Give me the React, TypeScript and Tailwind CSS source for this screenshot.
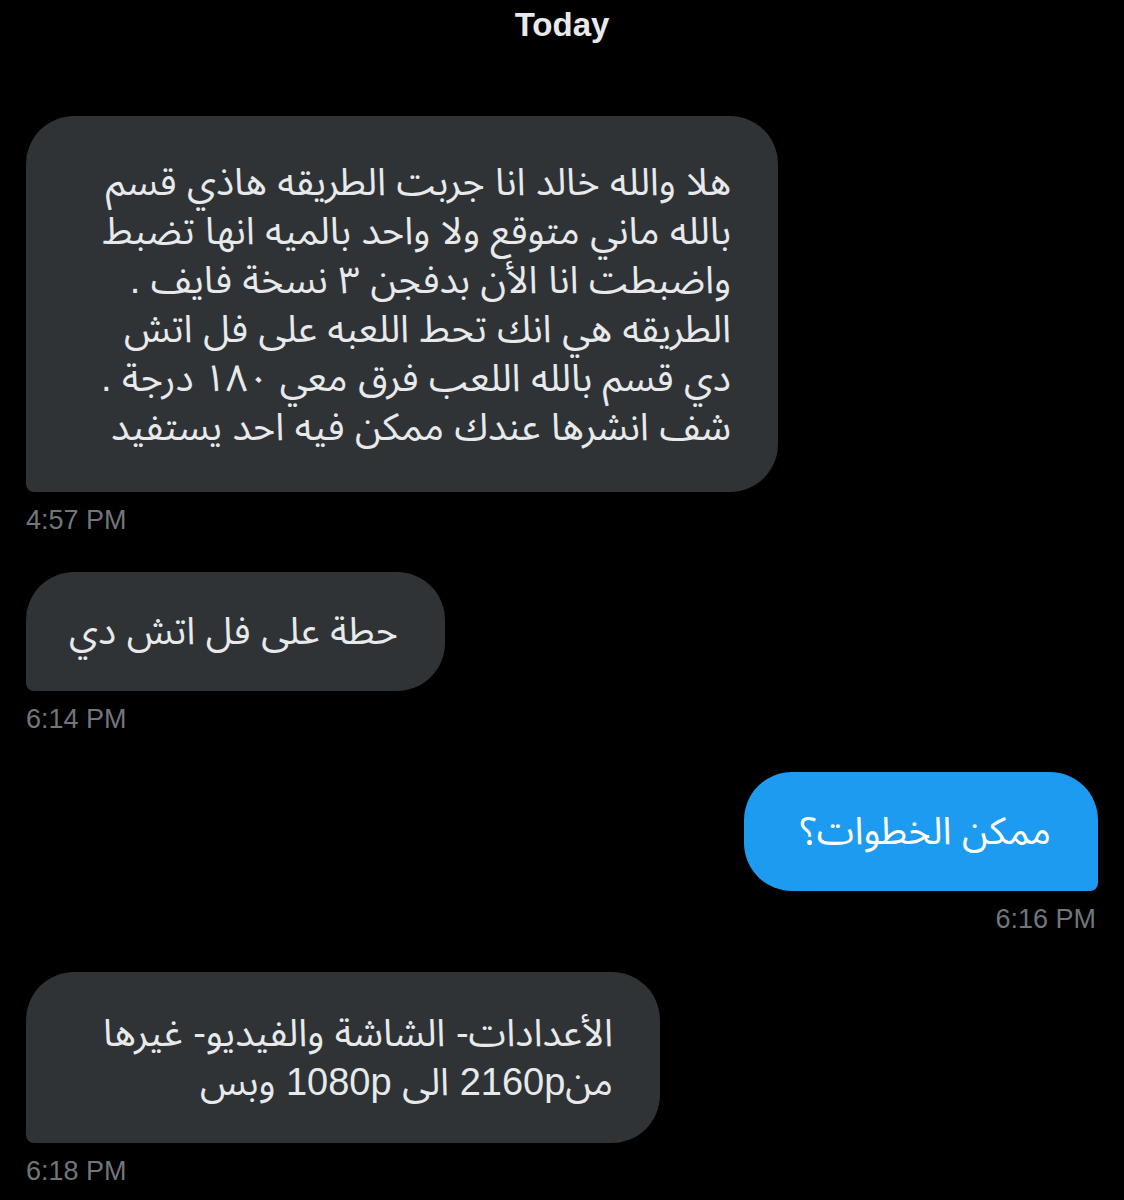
const arabic = "font-['Liberation_Sans','Noto_Sans_Arabic','DejaVu_Sans',sans-serif]";

type BubbleProps = {
  lines: string[];
  sent?: boolean;
  width: string;
  padY: string;
};

function Bubble({ lines, sent = false, width, padY }: BubbleProps) {
  return (
    <div
      dir="rtl"
      className={[
        width,
        padY,
        arabic,
        'pr-[47px] text-right text-[38px] leading-[49px]',
        sent
          ? 'self-end rounded-[48px] rounded-br-[8px] bg-[#1d9bf0] text-white'
          : 'self-start rounded-[48px] rounded-bl-[8px] bg-[#2f3336] text-[#e7e9ea]',
      ].join(' ')}
    >
      {lines.map((line) => (
        <div key={line} className="whitespace-nowrap">
          {line}
        </div>
      ))}
    </div>
  );
}

function Time({ children, sent = false }: { children: string; sent?: boolean }) {
  return (
    <div
      className={`mt-[14px] font-['Liberation_Sans',Arial,sans-serif] text-[27px] leading-[28px] text-[#71767b] ${
        sent ? 'self-end pr-[2px]' : 'self-start'
      }`}
    >
      {children}
    </div>
  );
}

export default function App() {
  return (
    <div className="flex min-h-[1200px] flex-col bg-black px-[26px] pt-[8px]">
      <div className="text-center font-['Liberation_Sans',Arial,sans-serif] text-[33px] font-bold leading-[34px] text-[#e7e9ea]">
        Today
      </div>

      <div className="mt-[74px] flex flex-col">
        <Bubble
          width="w-[752px]"
          padY="pt-[42px] pb-[40px]"
          lines={[
            'هلا والله خالد انا جربت الطريقه هاذي قسم',
            'بالله ماني متوقع ولا واحد بالميه انها تضبط',
            'واضبطت انا الأن بدفجن ٣ نسخة فايف .',
            'الطريقه هي انك تحط اللعبه على فل اتش',
            'دي قسم بالله اللعب فرق معي ١٨٠ درجة .',
            'شف انشرها عندك ممكن فيه احد يستفيد',
          ]}
        />
        <Time>4:57 PM</Time>
      </div>

      <div className="mt-[38px] flex flex-col">
        <Bubble width="w-[419px]" padY="py-[35px]" lines={['حطة على فل اتش دي']} />
        <Time>6:14 PM</Time>
      </div>

      <div className="mt-[39px] flex flex-col">
        <Bubble sent width="w-[354px]" padY="py-[35px]" lines={['ممكن الخطوات؟']} />
        <Time sent>6:16 PM</Time>
      </div>

      <div className="mt-[39px] flex flex-col">
        <Bubble
          width="w-[634px]"
          padY="pt-[37px] pb-[36px]"
          lines={['الأعدادات- الشاشة والفيديو- غيرها', 'من2160p الى 1080p وبس']}
        />
        <Time>6:18 PM</Time>
      </div>
    </div>
  );
}
